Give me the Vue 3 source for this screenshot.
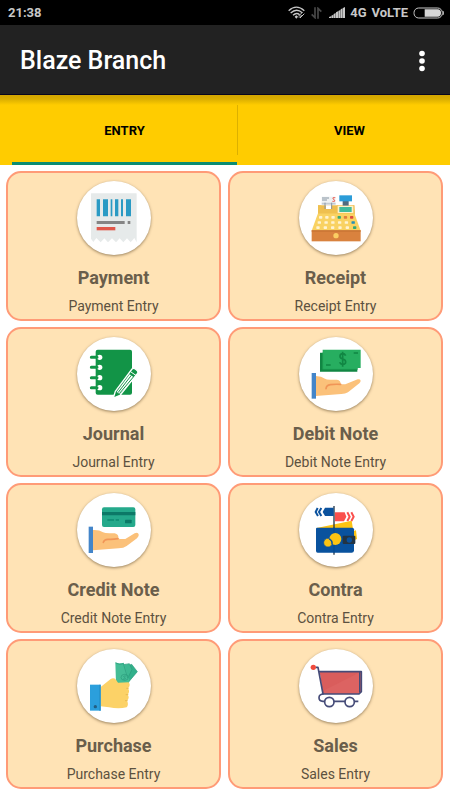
<script setup>
import { ref } from 'vue'

const tabs = ['ENTRY', 'VIEW']
const active = ref('ENTRY')

const entries = [
  { id: 'payment', title: 'Payment', box: '9 17 222 222' },
  { id: 'receipt', title: 'Receipt', box: '10 17 222 222' },
  { id: 'journal', title: 'Journal', box: '9 19 222 222' },
  { id: 'debit', title: 'Debit Note', box: '10 19 222 222' },
  { id: 'credit', title: 'Credit Note', box: '9 15 222 222' },
  { id: 'contra', title: 'Contra', box: '10 15 222 222' },
  { id: 'purchase', title: 'Purchase', box: '9 14 222 222' },
  { id: 'sales', title: 'Sales', box: '10 15 222 222' },
]

const keyColors = [
  ['#fff3d0', '#fff3d0', '#fff3d0', '#35a877', '#e0803c', '#dd4b3e'],
  ['#fff3d0', '#fff3d0', '#fff3d0', '#fff3d0', '#fff3d0', '#2490b8'],
  ['#fff3d0', '#fff3d0', '#fff3d0', '#fff3d0', '#fff3d0', '#35a877'],
]
const keys = keyColors.flatMap((row, r) =>
  row.map((fill, c) => ({
    x: 70 - r * 4 + c * (18.6 + r * 1.7),
    y: 122 + r * 14 + r * 1.5,
    fill,
  })),
)
</script>

<template>
  <div class="screen">
    <div class="status">
      <span class="clock">21:38</span>
      <div class="indicators">
        <svg class="wifi" viewBox="0 0 54 39" aria-hidden="true">
          <g fill="none" stroke="#c8c8c8" stroke-width="4">
            <path d="M2 14Q25-7 49 14" />
            <path d="M8 21Q25 5 43 20" />
            <path d="M15 28Q25 18 35 26" />
          </g>
          <path d="M20 32L25 28L30 32L25 38Z" fill="#c8c8c8" />
          <path d="M31 31L43 19M36 36L49 23M33 35L41 27" stroke="#c8c8c8" stroke-width="3" />
        </svg>
        <svg class="arrows" viewBox="0 0 33 36" aria-hidden="true">
          <path d="M12 1V32L2 22M21 35V4L31 14" fill="none" stroke="#484848" stroke-width="5" />
        </svg>
        <svg class="signal" viewBox="0 0 48 33" aria-hidden="true">
          <path
            d="M0 33V30L6 28V33ZM7 33V26L13 23V33ZM14 33V21L20 18V33ZM21 33V16L27 13V33ZM28 33V12L34 9V33ZM35 33V7L41 4V33ZM42 33V3L48 0V33Z"
            fill="#c8c8c8"
          />
        </svg>
        <span class="network">4G</span>
        <span>VoLTE</span>
        <svg class="battery" viewBox="0 0 93 36" aria-hidden="true">
          <rect x="3" y="3" width="85" height="30" rx="14" fill="none" stroke="#c8c8c8" stroke-width="3" />
          <path d="M35 7H74Q84 7 84 18Q84 29 74 29H35Z" fill="#d6d6d6" />
          <path d="M90 12Q93 18 90 24" stroke="#c8c8c8" stroke-width="3" fill="none" />
        </svg>
      </div>
    </div>

    <header class="toolbar">
      <h1>Blaze Branch</h1>
      <button class="more" type="button" aria-label="More options">
        <svg viewBox="0 0 8 22" aria-hidden="true">
          <g fill="#fff">
            <circle cx="4" cy="3.5" r="2.8" />
            <circle cx="4" cy="11" r="2.8" />
            <circle cx="4" cy="18.5" r="2.8" />
          </g>
        </svg>
      </button>
    </header>

    <nav class="tabs" role="tablist">
      <button
        v-for="tab in tabs"
        :key="tab"
        type="button"
        role="tab"
        class="tab"
        :class="{ active: active === tab }"
        :aria-selected="active === tab"
        @click="active = tab"
      >
        {{ tab }}
      </button>
    </nav>

    <main class="grid">
      <button v-for="entry in entries" :key="entry.id" type="button" class="card">
        <span class="disc">
          <svg :viewBox="entry.box" aria-hidden="true">
            <g v-if="entry.id === 'payment'">
              <path
                d="M52 54H187Q188 54 188 55V201L181 188L170 201L159 189L148 201L137 189L126 201L114 189L102 201L91 189L80 201L67 188L58 200L51 190V55Z"
                fill="#e6eaea"
              />
              <path
                d="M68 72H78V123H68ZM87 72H102V123H87ZM110 72H115V123H110ZM123 72H133V123H123ZM141 72H147V123H141ZM156 72H171V123H156Z"
                fill="#2a9ac4"
              />
              <path d="M68 137H152V146H68ZM161 137H169V146H161Z" fill="#858585" />
              <path d="M68 155H124V165H68Z" fill="#e0584b" />
            </g>

            <g v-else-if="entry.id === 'receipt'">
              <path d="M67 90H176L178 118H67Z" fill="#eebd4e" />
              <path d="M67 114H176L195 166H48Z" fill="#f9d262" />
              <path d="M67 90H77V103H124V90H176V114H67Z" fill="#efc04f" />
              <rect x="78" y="64" width="41" height="18" fill="#eef1f2" />
              <path d="M79 68H100M79 74H94" stroke="#8795a3" stroke-width="3" />
              <path d="M119 67H112V71L117 74V78H110" stroke="#e9695f" stroke-width="3" fill="none" />
              <path d="M78 82H120V88H78Z" fill="#c3cbd3" />
              <path d="M88 82V101M108 82V101" stroke="#8795a3" stroke-width="3" />
              <rect x="91" y="90" width="15" height="11" fill="#fff" />
              <rect x="141" y="77" width="18" height="15" fill="#536b7d" />
              <rect x="131" y="60" width="38" height="18" fill="#2b9cd8" />
              <rect x="126" y="91" width="47" height="22" fill="#fff0c9" />
              <rect x="131" y="95" width="37" height="15" fill="#3fbb9d" />
              <rect v-for="(key, i) in keys" :key="i" :x="key.x" :y="key.y" width="10" height="8" rx="2" :fill="key.fill" />
              <rect x="48" y="165" width="147" height="33" fill="#d9823e" />
              <path d="M48 165H195V169H48Z" fill="#c97435" />
              <circle cx="121" cy="181" r="8" fill="#fbce63" />
            </g>

            <g v-else-if="entry.id === 'journal'">
              <path d="M71 57H168Q174 57 174 63V186Q174 192 168 192H71Q65 192 65 186V63Q65 57 71 57Z" fill="#129447" />
              <g fill="#fff">
                <circle cx="77" cy="80" r="8" />
                <circle cx="77" cy="110" r="8" />
                <circle cx="77" cy="141" r="8" />
                <circle cx="77" cy="171" r="8" />
              </g>
              <path d="M52 80H69M52 110H69M52 141H69M52 171H69" stroke="#129447" stroke-width="9" stroke-linecap="round" />
              <path
                d="M118 202L124 182L174 115Q178 111 184 115L190 120Q194 124 190 129L138 194Z"
                fill="#129447"
                stroke="#fff"
                stroke-width="4"
              />
              <path d="M128 184L167 131L182 142L138 191Z" fill="#fff" />
              <path d="M132 186L172 134M136 189L178 139" stroke="#129447" stroke-width="3" />
              <path d="M171 124L187 135" stroke="#fff" stroke-width="3" />
            </g>

            <g v-else-if="entry.id === 'debit'">
              <path d="M73 66H86V113H185V123H73Z" fill="#118643" />
              <path d="M81 57H195V112H186V116H81Z" fill="#27ae60" />
              <path d="M81 66V116H186" stroke="#1d9b50" stroke-width="2" fill="none" />
              <path d="M174 67H187M91 103H105" stroke="#118643" stroke-width="4" />
              <path d="M150 75Q147 69 141 69Q133 69 133 77Q133 83 141 85Q150 87 150 94Q150 101 141 101Q134 101 132 95M141 63V108" stroke="#118643" stroke-width="5" fill="none" />
              <path d="M60 136Q78 137 88 144Q92 147 104 147H124Q136 149 135 161H149L186 146Q194 145 195 150Q195 154 191 158L157 185Q149 190 137 190L60 196Z" fill="#fbc17a" />
              <path d="M135 161Q116 160 104 162Q92 164 91 174" fill="none" stroke="#f19557" stroke-width="5" stroke-linecap="round" />
              <path d="M48 127H61V204H48Z" fill="#4385c9" />
            </g>

            <g v-else-if="entry.id === 'credit'">
              <rect x="84" y="58" width="100" height="59" rx="6" fill="#25a98b" />
              <path d="M84 72H184V82H84Z" fill="#0c7967" />
              <path d="M100 96H120M125 96H135" stroke="#0c8a71" stroke-width="4" />
              <rect x="153" y="95" width="20" height="11" rx="2" fill="#0b7967" />
              <path d="M57 126Q76 125 87 133Q93 136 106 136H122Q135 140 133 150Q132 154 144 153H154L182 136Q192 131 194 139Q196 145 189 151L158 174Q149 181 134 181L57 187Z" fill="#fbc17a" />
              <path d="M132 152Q116 155 104 154Q91 153 88 163" fill="none" stroke="#f19557" stroke-width="5" stroke-linecap="round" />
              <path d="M44 116H57V195H44Z" fill="#4385c9" />
            </g>

            <g v-else-if="entry.id === 'contra'">
              <path d="M63 120L168 98L173 129L181 127L184 153L169 160Z" fill="#fcc313" />
              <path d="M115 54V200" stroke="#263645" stroke-width="4" />
              <path d="M88 59H114V84H88L81 72Z" fill="#0b529e" />
              <path d="M66 60L60 72L67 84M77 60L70 72L77 84" stroke="#0b529e" stroke-width="6" fill="none" />
              <path d="M118 73H147L152 86L145 100H118Z" fill="#fa504d" />
              <path d="M155 73L162 86L155 99M167 73L174 86L167 99" stroke="#fa504d" stroke-width="6" fill="none" />
              <path d="M64 119H170Q175 119 175 124V188Q174 194 168 194H66Q61 194 61 188V122Q61 119 64 119Z" fill="#09529e" />
              <path d="M115 118V194" stroke="#07488c" stroke-width="3" />
              <circle cx="119" cy="153" r="18" fill="#fcc313" />
              <circle cx="97" cy="164" r="13" fill="#fcc313" stroke="#09529e" stroke-width="2" />
              <path d="M100 153Q110 157 109 169" fill="none" stroke="#09529e" stroke-width="4" />
              <rect x="141" y="143" width="38" height="25" rx="3" fill="#233443" />
              <circle cx="161" cy="156" r="8" fill="#09529e" />
            </g>

            <g v-else-if="entry.id === 'purchase'">
              <path d="M148 62Q163 66 173 60L190 82L157 121L139 105Z" fill="#32b18b" stroke="#2a9c7b" stroke-width="2" />
              <path d="M136 59Q153 62 166 58L174 75L153 120H131Z" fill="#3db891" stroke="#2a9c7b" stroke-width="2" />
              <path d="M124 54Q136 60 149 55L166 106L165 116L126 115Z" fill="#44bd96" />
              <path d="M125 56Q137 63 148 58L161 101" stroke="#2a9c7b" stroke-width="2" fill="none" />
              <ellipse cx="152" cy="99" rx="11" ry="9" fill="none" stroke="#2a9c7b" stroke-width="2" />
              <path d="M156 95H150Q147 96 151 99Q157 101 153 104H147" fill="none" stroke="#2a9c7b" stroke-width="2" />
              <path d="M80 128L110 104Q119 99 126 106L132 115L164 114Q171 122 162 132Q169 142 161 151Q168 160 159 169Q165 180 158 189Q134 195 105 189L80 186Z" fill="#fcd267" />
              <path d="M164 132H157M163 151H155M161 169H153" stroke="#e9b950" stroke-width="3" />
              <path d="M48 121H80V199H48Z" fill="#2b9fdc" />
              <path d="M76 121H80V199H76Z" fill="#238fc8" />
              <circle cx="64" cy="187" r="5" fill="#225f83" />
            </g>

            <g v-else>
              <path d="M72 83H197V144L190 150H82Z" fill="#d95d5c" />
              <path d="M86 139L190 86V147H84Z" fill="#e06967" opacity=".5" />
              <path d="M61 70H67L82 150H190L197 143V83H70" fill="none" stroke="#454b78" stroke-width="5" stroke-linejoin="round" />
              <path d="M192 84V145" stroke="#454b78" stroke-width="4" />
              <path d="M84 150Q70 150 70 161Q70 171 82 172H188" fill="none" stroke="#454b78" stroke-width="5" />
              <circle cx="101" cy="174" r="14" fill="#fff" stroke="#454b78" stroke-width="5" />
              <circle cx="162" cy="174" r="14" fill="#fff" stroke="#454b78" stroke-width="5" />
              <circle cx="53" cy="70" r="8" fill="#ef4b3e" />
            </g>
          </svg>
        </span>
        <span class="title">{{ entry.title }}</span>
        <span class="subtitle">{{ entry.title }} Entry</span>
      </button>
    </main>
  </div>
</template>

<style>
body {
  margin: 0;
  background: #fff;
}
</style>

<style scoped>
.screen {
  min-height: 100vh;
  background: #fff;
  font-family: Roboto, "Liberation Sans", sans-serif;
}

button {
  margin: 0;
  padding: 0;
  border: 0;
  background: none;
  font-family: inherit;
  cursor: pointer;
}

svg {
  display: block;
}

.status {
  display: flex;
  align-items: center;
  justify-content: space-between;
  height: 25px;
  padding: 0 6px 0 8px;
  background: #000;
  color: #c8c8c8;
  font-size: 13px;
  font-weight: 700;
  line-height: 25px;
}

.indicators {
  display: flex;
  align-items: center;
  gap: 5px;
}

.wifi {
  width: 18px;
  height: 13px;
}

.arrows {
  width: 11px;
  height: 12px;
}

.signal {
  width: 16px;
  height: 11px;
  margin-left: 2px;
}

.battery {
  width: 31px;
  height: 12px;
}

.toolbar {
  display: flex;
  align-items: center;
  justify-content: space-between;
  box-sizing: border-box;
  height: 70px;
  padding: 2px 20px 0;
  border-bottom: 1px solid #08061c;
  background: #222;
}

h1 {
  margin: 0;
  color: #fff;
  font-size: 25px;
  font-weight: 500;
  line-height: 32px;
}

.more {
  padding: 4px;
}

.more svg {
  width: 8px;
  height: 22px;
}

.tabs {
  display: flex;
  height: 70px;
  padding-left: 12px;
  overflow: hidden;
  background: linear-gradient(#d2a500, #daae00 4px, #fc0 10px);
}

.tab {
  flex: 0 0 50vw;
  box-sizing: border-box;
  border-top: 3px solid transparent;
  border-bottom: 3px solid transparent;
  color: #000;
  font-size: 13px;
  font-weight: 700;
}

.tab.active {
  border-bottom-color: #0b8c72;
}

.tab + .tab {
  background: linear-gradient(#dcb000, #dcb000) left 7px / 1px 50px no-repeat;
}

.grid {
  display: grid;
  grid-template-columns: 1fr 1fr;
  gap: 6px 7px;
  padding: 6px 7px 6px 6px;
}

.card {
  display: flex;
  flex-direction: column;
  align-items: center;
  box-sizing: border-box;
  height: 150px;
  padding-top: 8px;
  border: 2px solid #ff9b77;
  border-radius: 15px;
  background: #ffe3b5;
}

.disc {
  width: 74px;
  height: 74px;
  border-radius: 50%;
  background: #fff;
  box-shadow: 0 1px 3px rgba(70, 50, 20, 0.55);
}

.disc svg {
  width: 74px;
  height: 74px;
}

.title {
  margin-top: 12px;
  color: #6a5e4b;
  font-size: 18px;
  font-weight: 700;
  line-height: 22px;
}

.subtitle {
  margin-top: 8px;
  color: #5c5140;
  font-size: 14px;
  line-height: 18px;
}
</style>
